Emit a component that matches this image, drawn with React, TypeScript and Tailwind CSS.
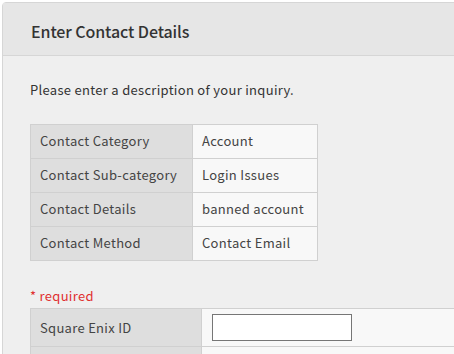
const rows = [
  { label: "Contact Category", value: "Account" },
  { label: "Contact Sub-category", value: "Login Issues" },
  { label: "Contact Details", value: "banned account" },
  { label: "Contact Method", value: "Contact Email" },
];

export default function App() {
  return (
    <div
      className="h-[354px] w-[454px] overflow-hidden bg-white pl-[2px] pt-[2px] text-[#333]"
      style={{ fontFamily: '"Noto Sans CJK JP", "Noto Sans", sans-serif' }}
    >
      <div className="h-[400px] w-[500px] rounded-tl-[4px] border border-[#d6d6d6] bg-[#efefef]">
        {/* Header */}
        <div className="flex h-[53px] items-center border-b border-[#d6d6d6] bg-[#e6e6e6] pl-[28px] pt-[3px] text-[16px] font-medium tracking-[-0.1px]">
          Enter Contact Details
        </div>

        {/* Body */}
        <div className="pl-[27px] pt-[24px] tracking-[0.3px]">
          <p className="text-[13px] text-[#333]">
            Please enter a description of your inquiry.
          </p>

          <table className="mt-[24px] border-collapse text-[13px]">
            <tbody>
              {rows.map((row) => (
                <tr key={row.label} className="h-[34px]">
                  <td className="w-[162px] border border-[#d0d0d0] bg-[#dedede] pl-[9px] text-[#444]">
                    {row.label}
                  </td>
                  <td className="w-[125px] border border-[#d0d0d0] bg-[#f8f8f8] pl-[9px] text-[#444]">
                    {row.value}
                  </td>
                </tr>
              ))}
            </tbody>
          </table>

          <p className="mt-[25px] text-[13px] text-[#e03030]">* required</p>

          <table className="mt-[3px] border-collapse text-[13px]">
            <tbody>
              <tr className="h-[38px]">
                <td className="w-[171px] border border-[#d0d0d0] bg-[#dedede] pl-[9px] text-[#444]">
                  Square Enix ID
                </td>
                <td className="w-[300px] border border-[#d0d0d0] bg-[#f8f8f8] pl-[10px]">
                  <input
                    type="text"
                    className="block h-[27px] w-[140px] border border-[#767676] bg-white"
                  />
                </td>
              </tr>
              <tr className="h-[38px]">
                <td className="border border-[#d0d0d0] bg-[#dedede]" />
                <td className="border border-[#d0d0d0] bg-[#f8f8f8]" />
              </tr>
            </tbody>
          </table>
        </div>
      </div>
    </div>
  );
}
